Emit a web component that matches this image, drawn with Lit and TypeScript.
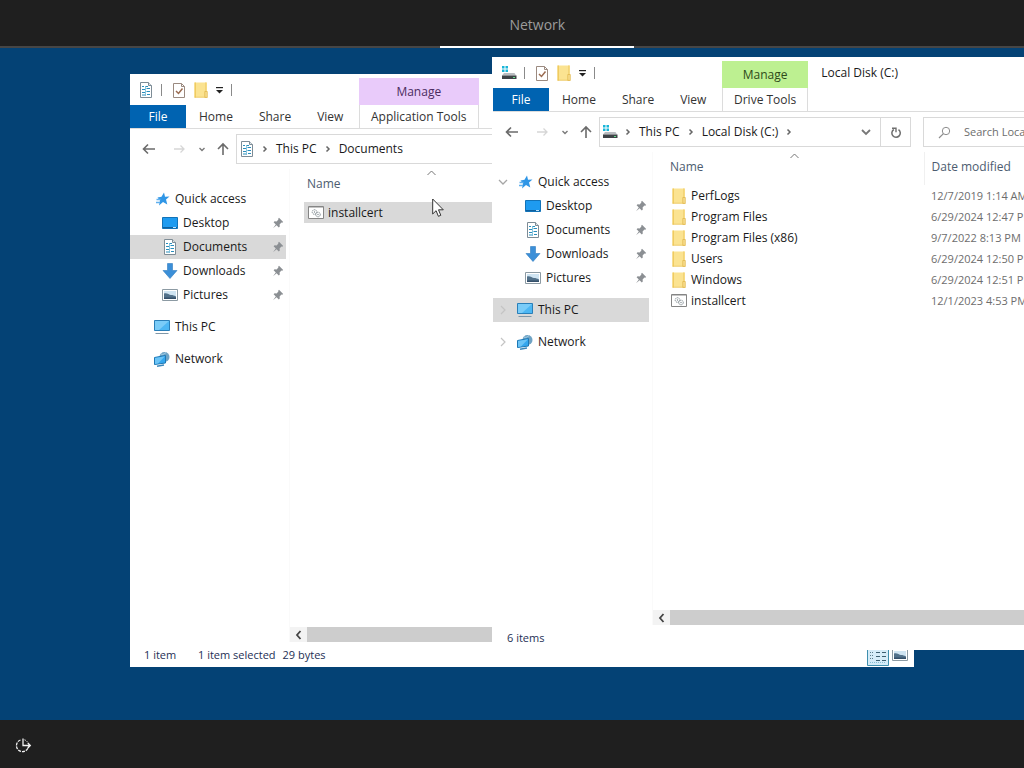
import { LitElement, html, svg, css, nothing, type TemplateResult } from "lit";
import { customElement, property } from "lit/decorators.js";
import { classMap } from "lit/directives/class-map.js";

/* ---------- icons ---------- */

const icon = (body: unknown, w = 16, h = 16) =>
  html`<svg class="icon" width=${w} height=${h} viewBox="0 0 ${w} ${h}" aria-hidden="true">${body}</svg>`;

const icons: Record<string, () => TemplateResult> = {
  document: () =>
    icon(svg`
      <path d="M2.500 .5h8l3 3v12h-11z" fill="#fff" stroke="#7d8c96"/>
      <path d="M10.500 .5v3h3" fill="#dfe6ea" stroke="#7d8c96"/>
      <path d="M4 4.500h2M7.500 4.500h2.500M4 7.500h3M8.500 6.500h3.500M4 10.500h3M8.500 9.500h3.500M4 13h3.500M9 12.500h3" stroke="#2b8fbd" stroke-width="1.200"/>
      <path d="M7.500 4v10" stroke="#6ab8d8" stroke-width=".8"/>`),
  drive: () =>
    icon(svg`
      <path d="M1 1h2.500v2.500H1zM4.500 1H7v2.500H4.500zM1 4.500h2.500V7H1zM4.500 4.500H7V7H4.500z" fill="#19b5d8"/>
      <path d="M3 8h10.500l1.500 2.500H1z" fill="#b9bcc0"/>
      <path d="M1 10.500h14.500V14H1z" fill="#3f4347"/>
      <path d="M12 12h2v1h-2z" fill="#61e08a"/>`),
  properties: () =>
    icon(svg`
      <path d="M2.500 1.500h8l3 3v11h-11z" fill="#fff" stroke="#9b8a80"/>
      <path d="M10.500 1.500v3h3" fill="none" stroke="#9b8a80"/>
      <path d="M5 9l2.500 2.500L11.500 6.500" fill="none" stroke="#9a6b50" stroke-width="1.500"/>`),
  folder: () =>
    icon(svg`
      <path d="M1.500 .5H12l2 0v15H1.500z" fill="#fbe391"/>
      <path d="M1.500 .5H3v15H1.500z" fill="#f0cb60"/>
      <path d="M12 .5h1.500V10H12z" fill="#f3d477"/>
      <path d="M11.800 9.500h2.500v6h-2.500z" fill="#f8dd8c" stroke="#e0b548" stroke-width=".7"/>
      <path d="M1.500 14.800h12v.7h-12z" fill="#e8c158"/>`),
  star: () =>
    icon(svg`
      <path d="M10 1.500l1 4.300 4.500-.3-3.500 3 1.300 5L9 11l-4 3.500 1-5L3.500 6.500l4-.7z" fill="#2f96e6"/>
      <path d="M2.500 8.500h4M2 11.500h4" stroke="#5fb0ee" stroke-width="1.300"/>`),
  desktop: () =>
    icon(svg`
      <path d="M.5 2.500h15v11H.5z" fill="#1e9bf0" stroke="#1273b8"/>
      <path d="M1 12h14v1H1z" fill="#0f5f9c"/>
      <path d="M11 12h3v1h-3z" fill="#bfe3fb"/>`),
  download: () =>
    icon(svg`<path d="M5.500 .5h5v7h4.500L8 15.500 1 7.500h4.500z" fill="#3b8fd8" stroke="#2f7cc0" stroke-width=".6"/>`),
  picture: () =>
    icon(svg`
      <path d="M.5 2.500h15v11H.5z" fill="#fff" stroke="#8c9aa3"/>
      <path d="M2 4h12v8H2z" fill="#cfe4f2"/>
      <path d="M2 6.500c3-1 5 1.500 7 1.500s3 .5 5 1.500V12H2z" fill="#52718a"/>
      <path d="M2 10.500h12V12H2z" fill="#35506a"/>`),
  pc: () =>
    icon(svg`
      <path d="M.5 1.500h15v10H.5z" fill="#4db7f3" stroke="#2a7fb8"/>
      <path d="M1 2h14L5 11H1z" fill="#7accf8"/>
      <path d="M1.500 14.500h13" stroke="#7f97a8"/>`),
  network: () =>
    icon(svg`
      <circle cx="10.500" cy="6" r="5" fill="#6fa3c4"/>
      <path d="M7 3c2 1 3 0 5-1.500" stroke="#a9d2ea" fill="none"/>
      <path d="M.5 6.500l11-2v7.500l-11 1.500z" fill="#35a7ee" stroke="#1d78b5"/>
      <path d="M1 7l10-1.800L4 12.500l-3 .4z" fill="#6cc4f6"/>
      <path d="M3 15.200l7-1.200" stroke="#3c87ba" stroke-width="1.400"/>`),
  script: () =>
    icon(svg`
      <path d="M.5 1.500h15v12H.5z" fill="#fff" stroke="#858585"/>
      <path d="M1 2.500h14" stroke="#c4c4c4"/>
      <circle cx="6.500" cy="7" r="2.300" fill="none" stroke="#7f8a90" stroke-dasharray="1.200 .6"/>
      <circle cx="6.500" cy="7" r=".7" fill="#7f8a90"/>
      <circle cx="10" cy="9.500" r="2.300" fill="none" stroke="#7f8a90" stroke-dasharray="1.200 .6"/>
      <circle cx="10" cy="9.500" r=".7" fill="#7f8a90"/>`),
  pin: () =>
    icon(svg`
      <path d="M7 .8l4.200 4.200-1 .8-.8-.2-1.800 1.800.2 2-1 1L4.600 8.200 1 11.200l2.800-3.800L1.600 5.200l1-1 2 .2 1.800-1.800-.2-.8z" fill="#8b8f93"/>`, 12, 12),
  back: () => icon(svg`<path d="M14 8H2.500M7 3.500L2.500 8 7 12.500" fill="none" stroke="#6b6b6b" stroke-width="1.600"/>`),
  forward: () => icon(svg`<path d="M3 8h10M9.500 4.500L13 8l-3.500 3.500" fill="none" stroke="#d6d6d6" stroke-width="1.300"/>`),
  up: () => icon(svg`<path d="M8 14V3M3 8l5-5 5 5" fill="none" stroke="#6b6b6b" stroke-width="1.600"/>`),
  recent: () => icon(svg`<path d="M1.500 3L4 5.500 6.500 3" fill="none" stroke="#7a7a7a" stroke-width="1.400"/>`, 8, 8),
  chevronDown: () => icon(svg`<path d="M2 4l4 4 4-4" fill="none" stroke="#777" stroke-width="1.800"/>`, 12, 12),
  chevronRight: () => icon(svg`<path d="M2.500 1.500L5 4 2.500 6.500" fill="none" stroke="#666" stroke-width="1.500"/>`, 8, 8),
  sort: () => icon(svg`<path d="M.5 5L4.500 1l4 4" fill="none" stroke="#777"/>`, 9, 6),
  expanded: () => icon(svg`<path d="M1 3l4 4 4-4" fill="none" stroke="#a6a6a6" stroke-width="1.300"/>`, 10, 10),
  collapsed: () => icon(svg`<path d="M3 1l4 4-4 4" fill="none" stroke="#c4c4c4" stroke-width="1.200"/>`, 10, 10),
  refresh: () =>
    icon(svg`
      <path d="M3.800 3.500A4.200 4.200 0 1 0 8.500 3.600" fill="none" stroke="#6f6f6f" stroke-width="1.500"/>
      <path d="M2 2.200h4v4" fill="none" stroke="#6f6f6f" stroke-width="1.400"/>`, 12, 12),
  search: () =>
    icon(svg`
      <circle cx="8" cy="5" r="3.700" fill="none" stroke="#8d8d8d"/>
      <path d="M5.400 7.600L1 12" stroke="#8d8d8d" stroke-width="1.200"/>`, 13, 13),
  customize: () => icon(svg`<path d="M1 2h7v1.200H1z" fill="#222"/><path d="M1 5h7L4.500 8.500z" fill="#222"/>`, 9, 10),
  scrollLeft: () => icon(svg`<path d="M6.500 1L3 5l3.500 4" fill="none" stroke="#444" stroke-width="1.800"/>`, 10, 10),
  details: () =>
    icon(svg`
      <path d="M.5 .5h21v21H.5z" fill="#d5ecf8" stroke="#3f8fae"/>
      <path d="M3 5.500h4M3 8.500h4M3 11.500h4M3 14.500h4" stroke="#5b7d8c" stroke-dasharray="1 1"/>
      <path d="M9 8.500h4M15 8.500h4M9 12.500h4M15 12.500h4M9 16.500h4M15 16.500h4" stroke="#3c5f70"/>
      <path d="M3 18.500h16" stroke="#86bdd3" stroke-dasharray="1 1"/>`, 22, 22),
  power: () =>
    icon(svg`
      <path d="M5.500 3A6 6 0 1 0 13.400 9.500" fill="none" stroke="#f2f2f2" stroke-width="1.300" stroke-dasharray="3 1"/>
      <path d="M8 1.500V8.500h7M12.800 6L15.300 8.500 12.800 11" fill="none" stroke="#f2f2f2" stroke-width="1.300"/>
      <path d="M9.500 2.800a5.500 5.500 0 0 1 3 2.400" fill="none" stroke="#f2f2f2" stroke-dasharray="1.500 1"/>`, 17, 16),
};

/* ---------- data ---------- */

interface FileEntry { name: string; icon: string; date?: string; selected?: boolean }
interface WindowModel {
  icon: string;
  title?: string;
  tool: string;
  tone: "purple" | "green";
  path: string[];
  trailing: boolean;
  expanders: boolean;
  current: string;
  files: FileEntry[];
  status: string[];
}

const documentsWindow: WindowModel = {
  icon: "document",
  tool: "Application Tools",
  tone: "purple",
  path: ["This PC", "Documents"],
  trailing: false,
  expanders: false,
  current: "Documents",
  files: [{ name: "installcert", icon: "script", selected: true }],
  status: ["1 item", "1 item selected", "29 bytes"],
};

const driveWindow: WindowModel = {
  icon: "drive",
  title: "Local Disk (C:)",
  tool: "Drive Tools",
  tone: "green",
  path: ["This PC", "Local Disk (C:)"],
  trailing: true,
  expanders: true,
  current: "This PC",
  files: [
    { name: "PerfLogs", icon: "folder", date: "12/7/2019 1:14 AM" },
    { name: "Program Files", icon: "folder", date: "6/29/2024 12:47 PM" },
    { name: "Program Files (x86)", icon: "folder", date: "9/7/2022 8:13 PM" },
    { name: "Users", icon: "folder", date: "6/29/2024 12:50 PM" },
    { name: "Windows", icon: "folder", date: "6/29/2024 12:51 PM" },
    { name: "installcert", icon: "script", date: "12/1/2023 4:53 PM" },
  ],
  status: ["6 items"],
};

const quickAccess = [
  { name: "Desktop", icon: "desktop" },
  { name: "Documents", icon: "document" },
  { name: "Downloads", icon: "download" },
  { name: "Pictures", icon: "picture" },
];

const reset = css`
  * { box-sizing: border-box; }
  button, input { font: inherit; color: inherit; background: none; border: 0; padding: 0; margin: 0; }
  .icon { display: block; flex: none; }
`;

/* ---------- explorer window ---------- */

@customElement("explorer-window")
export class ExplorerWindow extends LitElement {
  @property({ attribute: false }) model!: WindowModel;

  static styles = [reset, css`
    :host {
      display: grid;
      grid-template-rows: auto auto 1fr 25px;
      background: #fff;
      color: #1a1a1a;
      font-size: 12px;
      line-height: 16px;
      white-space: nowrap;
    }
    .ribbon {
      display: grid;
      grid-template: 31px 23px / 229px auto 1fr;
      border-bottom: 1px solid #dcdcdc;
    }
    .toolbar { display: flex; align-items: center; padding-left: 8px; }
    .toolbar .sep { width: 1px; height: 12px; background: #8a8a8a; margin: 0 9px 0 7px; }
    .toolbar .sep.end { margin: 0 0 0 7px; }
    .toolbar .tools { display: flex; align-items: center; gap: 6px; }
    .tabs { display: flex; grid-row: 2; grid-column: 1; color: #333; }
    .tab { flex: none; padding: 1px 13px 0; }
    .tab.file { width: 56px; padding: 1px 0 0; background: #0063b1; color: #fff; }
    .context {
      grid-row: 1 / 3;
      grid-column: 2;
      display: grid;
      grid-template-rows: 27px 23px;
      align-self: end;
      text-align: center;
      color: #333;
    }
    .context .head { display: grid; place-items: center; padding-top: 1px; }
    .context .tool { border: solid #dcdcdc; border-width: 0 1px; padding: 1px 11px 0; }
    .purple .head { background: #e9cbfa; color: #4b2c60; }
    .green .head { background: #bdf091; color: #2e4a1a; }
    .title { grid-row: 1; grid-column: 3; align-self: center; margin: 0; padding-left: 13px; font: inherit; }

    .addressbar {
      display: grid;
      grid-template-columns: 106px 312px 1fr;
      align-items: center;
      height: 40px;
      padding-right: 10px;
    }
    .history { display: flex; align-items: center; padding-left: 11px; }
    .history .fwd { margin: 0 11px 0 14px; }
    .history .up { margin-left: 9px; }
    .path { display: flex; align-items: center; height: 30px; border: 1px solid #d9d9d9; padding-left: 2px; }
    .crumbs { display: flex; align-items: center; flex: 1; gap: 7px; padding-left: 6px; }
    .drop { padding: 0 8px; }
    .refresh { display: grid; place-items: center; width: 30px; height: 28px; border-left: 1px solid #d9d9d9; }
    .search {
      display: flex;
      align-items: center;
      gap: 13px;
      height: 30px;
      margin-left: 12px;
      padding-left: 14px;
      border: 1px solid #d9d9d9;
      font-size: 11px;
    }
    .search input { width: 100%; outline: 0; }
    .search input::placeholder { color: #6d6d6d; opacity: 1; }

    .body { display: grid; grid-template-columns: 160px 1fr; min-height: 0; }
    .nav { padding: 18px 3px 0 0; border-right: 1px solid #fafafa; }
    .nav ul { list-style: none; margin: 0 0 8px; padding: 0; }
    .item {
      display: flex;
      align-items: center;
      width: 100%;
      height: 24px;
      padding: 0 2px 0 5px;
    }
    .item.current { background: #d9d9d9; }
    .expander { width: 19px; }
    .item.child .expander { width: 27px; }
    .item .label { padding-left: 5px; }
    .item .pin { margin-left: auto; }

    .content { display: grid; grid-template-rows: 1fr 15px; min-width: 0; }
    .files { border-collapse: collapse; table-layout: fixed; width: 100%; align-self: start; }
    .files th { position: relative; height: 33px; padding: 0 0 3px 7px; text-align: left; font-weight: 400; color: #4c5c70; }
    .files th.name { width: 271px; padding-left: 17px; }
    .files th.date { border-left: 1px solid #f0f0f0; }
    .files td { height: 21px; padding: 0; }
    .files td.date { padding-left: 7px; color: #6d6d6d; font-size: 11px; }
    .sort { position: absolute; top: 1px; left: 137px; }
    .cell { display: flex; align-items: center; gap: 4px; height: 21px; margin-left: 14px; padding-left: 4px; }
    .selected .cell, .selected td.rest { background: #d9d9d9; }
    .scrollbar { display: flex; background: #f3f3f3; }
    .scrollbar .arrow { display: grid; place-items: center; width: 17px; }
    .scrollbar .thumb { flex: 1; background: #cdcdcd; margin-right: 60px; }

    .status { display: flex; align-items: center; padding: 0 6px 0 14px; color: #1e2f55; font-size: 11px; }
    .status .count { min-width: 54px; }
    .status .note { margin-right: 7px; }
    .views { display: flex; align-items: center; gap: 3px; margin-left: auto; }
  `];

  private item(name: string, ic: string, opts: { child?: boolean; open?: boolean } = {}) {
    const m = this.model;
    return html`
      <li>
        <button class=${classMap({ item: true, child: !!opts.child, current: m.current === name })}>
          <span class="expander">${m.expanders && !opts.child ? icons[opts.open ? "expanded" : "collapsed"]() : nothing}</span>
          ${icons[ic]()}
          <span class="label">${name}</span>
          ${opts.child ? html`<span class="pin">${icons.pin()}</span>` : nothing}
        </button>
      </li>`;
  }

  render() {
    const m = this.model;
    const dated = m.files.some((f) => f.date);
    return html`
      <header class="ribbon">
        <div class="toolbar">
          ${icons[m.icon]()}<span class="sep"></span>
          <div class="tools">
            <button>${icons.properties()}</button>
            <button>${icons.folder()}</button>
            <button>${icons.customize()}</button>
          </div>
          <span class="sep end"></span>
        </div>
        <div class="tabs">
          <button class="tab file">File</button>
          <button class="tab">Home</button>
          <button class="tab">Share</button>
          <button class="tab">View</button>
        </div>
        <div class="context ${m.tone}">
          <div class="head">Manage</div>
          <button class="tool">${m.tool}</button>
        </div>
        ${m.title ? html`<h2 class="title">${m.title}</h2>` : nothing}
      </header>

      <div class="addressbar">
        <div class="history">
          <button>${icons.back()}</button>
          <button class="fwd">${icons.forward()}</button>
          <button>${icons.recent()}</button>
          <button class="up">${icons.up()}</button>
        </div>
        <div class="path">
          ${icons[m.icon]()}
          <div class="crumbs">
            ${m.path.map((p) => html`${icons.chevronRight()}<button>${p}</button>`)}
            ${m.trailing ? icons.chevronRight() : nothing}
          </div>
          <button class="drop">${icons.chevronDown()}</button>
          <button class="refresh">${icons.refresh()}</button>
        </div>
        ${m.title
          ? html`<label class="search">${icons.search()}<input type="text" placeholder="Search ${m.title}" /></label>`
          : nothing}
      </div>

      <div class="body">
        <nav class="nav">
          <ul>
            ${this.item("Quick access", "star", { open: true })}
            ${quickAccess.map((q) => this.item(q.name, q.icon, { child: true }))}
          </ul>
          <ul>${this.item("This PC", "pc")}</ul>
          <ul>${this.item("Network", "network")}</ul>
        </nav>
        <div class="content">
          <table class="files">
            <thead>
              <tr>
                <th class="name">Name<span class="sort">${icons.sort()}</span></th>
                <th class="date">${dated ? "Date modified" : nothing}</th>
              </tr>
            </thead>
            <tbody>
              ${m.files.map((f) => html`
                <tr class=${classMap({ selected: !!f.selected })}>
                  <td><div class="cell">${icons[f.icon]()}<span>${f.name}</span></div></td>
                  <td class=${f.date ? "date" : "rest"}>${f.date ?? nothing}</td>
                </tr>`)}
            </tbody>
          </table>
          <div class="scrollbar">
            <button class="arrow">${icons.scrollLeft()}</button>
            <div class="thumb"></div>
          </div>
        </div>
      </div>

      <footer class="status">
        ${m.status.map((s, i) => html`<span class=${i ? "note" : "count"}>${s}</span>`)}
        <div class="views">
          <button>${icons.details()}</button>
          <button>${icons.picture()}</button>
        </div>
      </footer>`;
  }
}

/* ---------- page ---------- */

@customElement("app-root")
export class AppRoot extends LitElement {
  static styles = [reset, css`
    :host {
      display: grid;
      grid-template-rows: 48px 1fr 48px;
      height: 100vh;
      overflow: hidden;
      background: #1f1f1f;
      font-family: "Open Sans", "Noto Sans", sans-serif;
    }
    .top { display: flex; padding-left: 43%; box-shadow: inset 0 -2px #464646; }
    .session {
      width: 194px;
      padding-top: 3px;
      border-bottom: 2px solid #fff;
      color: #9c9c9c;
      font-size: 14px;
      line-height: 20px;
    }
    .desktop { position: relative; overflow: hidden; background: #044275; }
    .window { position: absolute; width: 784px; height: 593px; }
    .documents { left: 130px; top: 26px; }
    .drive { left: 492px; top: 9px; width: 785px; border-left: 1px solid #fff; }
    .cursor { position: absolute; left: 432px; top: 150px; }
    .bottom { display: flex; align-items: center; padding: 2px 0 0 15px; }
  `];

  render() {
    return html`
      <header class="top"><button class="session">Network</button></header>
      <main class="desktop">
        <explorer-window class="window documents" .model=${documentsWindow}></explorer-window>
        <explorer-window class="window drive" .model=${driveWindow}></explorer-window>
        <svg class="cursor" width="13" height="20" viewBox="0 0 13 20" aria-hidden="true">
          <path d="M.7 1v15l3.400-3.300 2.300 5.600 2.400-1-2.300-5.500h4.800z" fill="#fff" stroke="#333"/>
        </svg>
      </main>
      <footer class="bottom"><button aria-label="Power">${icons.power()}</button></footer>`;
  }
}
